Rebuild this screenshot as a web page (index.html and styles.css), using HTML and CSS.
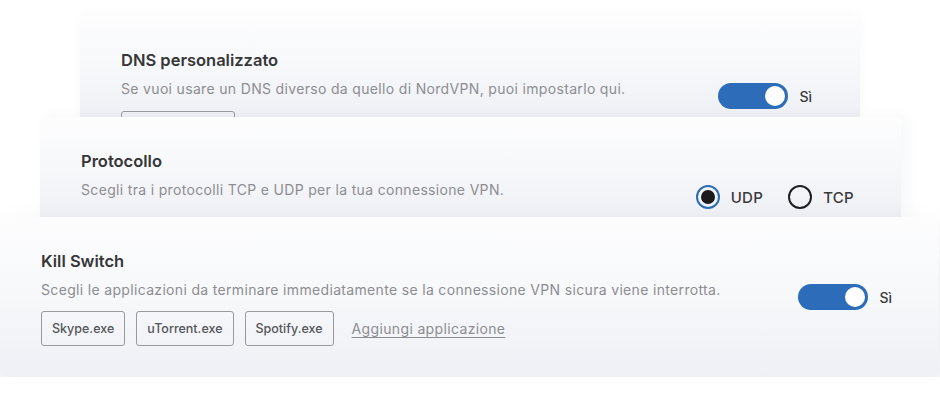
FILE: index.html
```html
<!DOCTYPE html>
<html lang="it">
<head>
<meta charset="utf-8">
<title>Impostazioni</title>
<link rel="stylesheet" href="styles.css">
</head>
<body>
<div class="stack">
  <section class="card card-dns">
    <div class="info">
      <h2 class="title">DNS personalizzato</h2>
      <p class="desc">Se vuoi usare un DNS diverso da quello di NordVPN, puoi impostarlo qui.</p>
      <div class="chips"><span class="chip chip-empty"></span></div>
    </div>
    <div class="control">
      <span class="toggle"><span class="knob"></span></span>
      <span class="label">Sì</span>
    </div>
  </section>
  <section class="card card-proto">
    <div class="info">
      <h2 class="title">Protocollo</h2>
      <p class="desc">Scegli tra i protocolli TCP e UDP per la tua connessione VPN.</p>
    </div>
    <div class="control radios">
      <span class="radio checked"><span class="dot"></span></span>
      <span class="label">UDP</span>
      <span class="radio off"></span>
      <span class="label">TCP</span>
    </div>
  </section>
  <section class="card card-kill">
    <div class="info">
      <h2 class="title">Kill Switch</h2>
      <p class="desc">Scegli le applicazioni da terminare immediatamente se la connessione VPN sicura viene interrotta.</p>
      <div class="chips">
        <span class="chip">Skype.exe</span>
        <span class="chip">uTorrent.exe</span>
        <span class="chip">Spotify.exe</span>
        <a class="add" href="#">Aggiungi applicazione</a>
      </div>
    </div>
    <div class="control">
      <span class="toggle"><span class="knob"></span></span>
      <span class="label">Sì</span>
    </div>
  </section>
</div>
</body>
</html>
```
FILE: styles.css
```css
* { box-sizing: border-box; }
html, body {
  margin: 0;
  background: #ffffff;
  font-family: Inter, "Open Sans", sans-serif;
}
.stack {
  display: flex;
  flex-direction: column;
  padding-top: 16px;
}
.card {
  display: flex;
  align-items: flex-start;
  justify-content: space-between;
  padding: 34px 48px 0 41px;
  background: linear-gradient(180deg, #fdfdfe 0%, #f7f8fa 50%, #eef0f5 100%);
  overflow: hidden;
  position: relative;
}
.card-dns {
  margin: 0 80px 0 80px;
  height: 101px;
  box-shadow: 0 -2px 10px rgba(30, 40, 80, 0.03);
  padding-right: 48px;
}
.card-proto {
  margin: 0 39px 0 40px;
  height: 100px;
  box-shadow: 6px 0 14px rgba(30, 40, 80, 0.04);
  padding-right: 47px;
}
.card-kill {
  margin: 0 1px 0 0;
  height: 160px;
  border-radius: 8px;
  box-shadow: 0 20px 36px rgba(30, 40, 80, 0.13);
  padding-right: 47px;
}
.title {
  margin: 0;
  font-size: 16.5px;
  line-height: 20px;
  font-weight: 600;
  color: #363638;
}
.desc {
  margin: 9px 0 0;
  font-size: 14px;
  line-height: 20px;
  letter-spacing: 0.33px;
  color: #8d8d92;
}
.chips {
  display: flex;
  align-items: center;
  gap: 11px;
  margin-top: 11px;
}
.card-dns .chips { margin-top: 12px; }
.chip {
  display: inline-flex;
  align-items: center;
  height: 35px;
  padding: 0 10px;
  border: 1px solid #9a9a9e;
  border-radius: 3px;
  font-size: 12.5px;
  font-weight: 500;
  color: #55555a;
}
.chip-empty { width: 114px; }
.add {
  margin-left: 7px;
  font-size: 14px;
  letter-spacing: 0.35px;
  color: #8d8d92;
  text-decoration: underline;
  text-underline-offset: 3px;
}
.control {
  display: flex;
  align-items: center;
  margin-top: 33px;
}
.toggle {
  display: flex;
  justify-content: flex-end;
  align-items: center;
  width: 70px;
  height: 26px;
  padding-right: 3px;
  border-radius: 13px;
  background: #2c6cb8;
}
.knob {
  width: 20px;
  height: 20px;
  border-radius: 50%;
  background: #ffffff;
}
.label {
  margin-left: 11px;
  font-size: 14px;
  font-weight: 500;
  color: #3a3a3c;
}
.radios { margin-top: 34px; }
.radios .label {
  font-size: 15px;
  letter-spacing: 0.3px;
}
.radio {
  display: flex;
  align-items: center;
  justify-content: center;
  width: 24px;
  height: 24px;
  border-radius: 50%;
}
.radio.checked { border: 2px solid #2c6cb8; }
.radio.off { border: 2px solid #1f1f21; margin-left: 25px; }
.dot {
  width: 14px;
  height: 14px;
  border-radius: 50%;
  background: #1a1a1c;
}
```
